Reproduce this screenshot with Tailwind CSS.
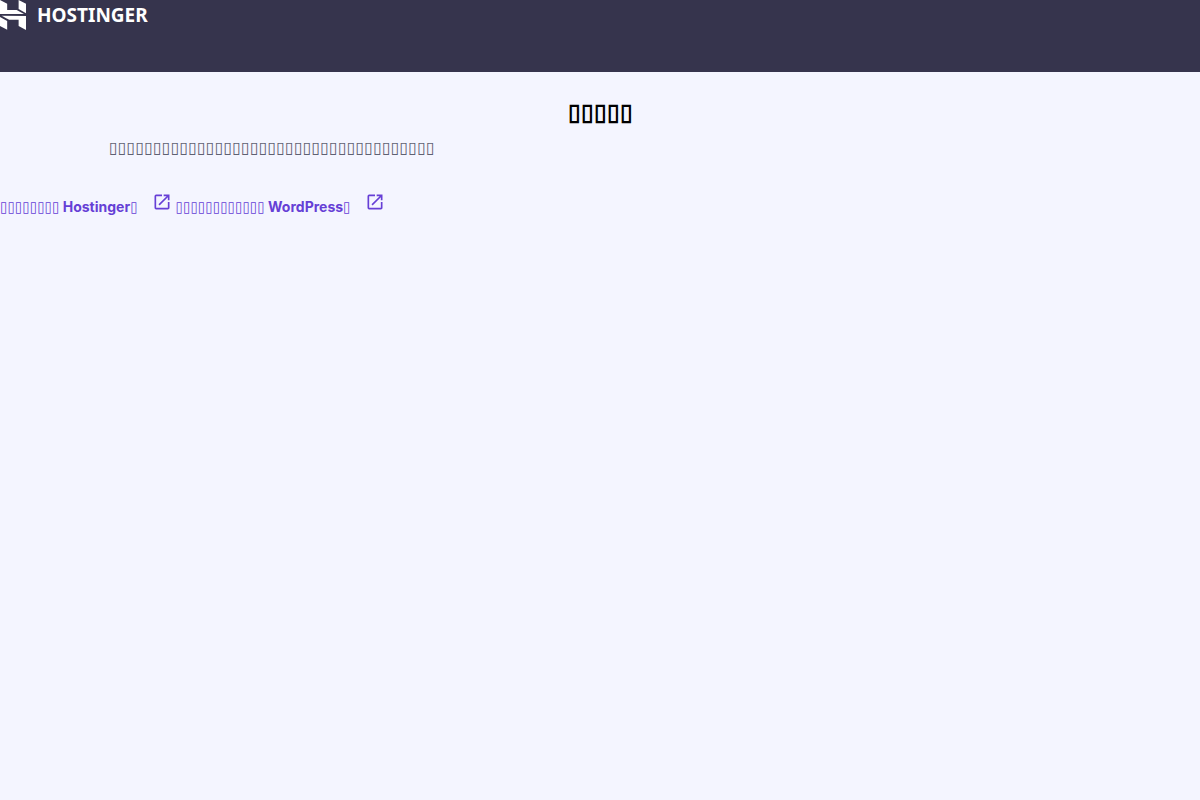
<!DOCTYPE html>
<html lang="en">
<head>
  <meta charset="UTF-8" />
  <meta name="viewport" content="width=device-width, initial-scale=1.0" />
  <title>Hostinger</title>
  <script src="https://cdn.jsdelivr.net/npm/@tailwindcss/browser@4"></script>
</head>
<body class="bg-[#f4f5ff] font-['Inter','DejaVu_Sans',sans-serif] antialiased">
  <!-- navbar -->
  <header class="h-18 bg-[#36344d]">
    <a href="#" class="flex w-fit items-center gap-[11px] text-white">
      <svg class="h-[30px] w-[26px]" viewBox="1.8 0 20.4 24" preserveAspectRatio="none" fill="currentColor" aria-hidden="true">
        <path d="M16.415 0v7.16l5.785 3.384V2.949L16.415 0ZM1.8 0v11.237h18.815L14.89 8.09l-7.457-.003V3.024L1.8 0Zm14.615 20.894v-5.019l-7.514-.005c.007.033-5.82-3.197-5.82-3.197l19.119.091V24l-5.785-3.106ZM1.8 13.551v7.343l5.633 2.949v-6.988L1.8 13.551Z" />
      </svg>
      <span class="font-['Noto_Sans',sans-serif] text-[19px] leading-[30px] font-bold">HOSTINGER</span>
    </a>
  </header>

  <main class="pt-6">
    <h1 class="text-center font-['Liberation_Sans',sans-serif] text-[23px] leading-8 font-bold text-black">▯▯▯▯▯</h1>
    <p class="mt-2 pl-[109px] font-['DejaVu_Sans',sans-serif] text-base leading-6 text-[#5f6172]">▯▯▯▯▯▯▯▯▯▯▯▯▯▯▯▯▯▯▯▯▯▯▯▯▯▯▯▯▯▯▯▯▯▯▯▯▯</p>

    <!-- links -->
    <div class="mt-8 flex flex-wrap gap-1 text-sm leading-6 font-bold text-[#663fd6]">
      <a href="#" class="flex items-baseline gap-[14px]">
        <span><span class="font-['DejaVu_Sans_Condensed',sans-serif] text-[15px]">▯▯▯▯▯▯▯▯</span> Hostinger<span class="font-['DejaVu_Sans_Condensed',sans-serif] text-[15px]">▯</span></span>
        <svg class="size-5" viewBox="0 0 24 24" fill="currentColor" aria-hidden="true">
          <path d="M19 19H5V5h7V3H5a2 2 0 0 0-2 2v14a2 2 0 0 0 2 2h14c1.1 0 2-.9 2-2v-7h-2v7zM14 3v2h3.59l-9.83 9.83 1.41 1.41L19 6.41V10h2V3h-7z" />
        </svg>
      </a>
      <a href="#" class="flex items-baseline gap-[14px]">
        <span><span class="font-['DejaVu_Sans_Condensed',sans-serif] text-[15px]">▯▯▯▯▯▯▯▯▯▯▯▯</span> WordPress<span class="font-['DejaVu_Sans_Condensed',sans-serif] text-[15px]">▯</span></span>
        <svg class="size-5" viewBox="0 0 24 24" fill="currentColor" aria-hidden="true">
          <path d="M19 19H5V5h7V3H5a2 2 0 0 0-2 2v14a2 2 0 0 0 2 2h14c1.1 0 2-.9 2-2v-7h-2v7zM14 3v2h3.59l-9.83 9.83 1.41 1.41L19 6.41V10h2V3h-7z" />
        </svg>
      </a>
    </div>
  </main>
</body>
</html>
